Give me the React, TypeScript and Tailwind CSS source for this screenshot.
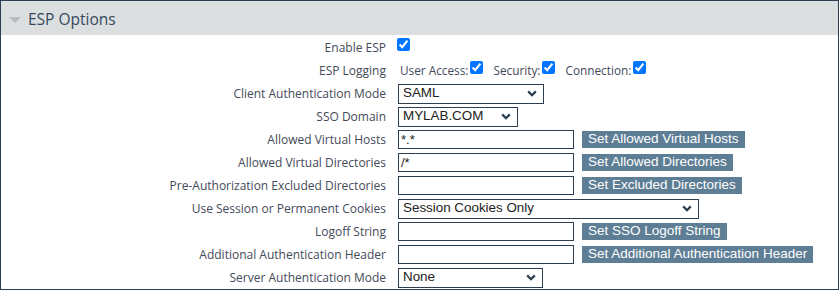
import React from 'react';

const labelFont = { fontFamily: '"Open Sans", "Noto Sans", sans-serif' };

const Chevron: React.FC = () => (
  <svg width="10" height="7" viewBox="0 0 10 7" className="shrink-0">
    <path d="M1.2 1.4 L5 5.2 L8.8 1.4" fill="none" stroke="#2c3e50" strokeWidth="2.3" />
  </svg>
);

const Select: React.FC<{ value: string; width: string }> = ({ value, width }) => (
  <div
    className={`${width} h-[20px] border border-[#2c3e50] flex items-center justify-between pl-[4px] pr-[6px] text-[13.4px] text-[#222] font-['Liberation_Sans',Arial,sans-serif]`}
  >
    <span>{value}</span>
    <Chevron />
  </div>
);

const TextBox: React.FC<{ value?: string }> = ({ value }) => (
  <div className="w-[176px] h-[19px] border border-[#2c3e50] flex items-center pl-[2px] text-[13px] text-[#222] font-['Liberation_Sans',Arial,sans-serif]">
    {value}
  </div>
);

const ActionButton: React.FC<{ children: React.ReactNode }> = ({ children }) => (
  <div className="ml-[8px] h-[17px] bg-[#5e7e95] text-white px-[6px] flex items-center text-[13.5px] font-['Liberation_Sans',Arial,sans-serif]">
    {children}
  </div>
);

const Check: React.FC<{ nudge?: boolean }> = ({ nudge }) => (
  <input
    type="checkbox"
    checked
    readOnly
    className={`m-0 w-[13px] h-[13px] mb-[6px] ${nudge ? '-ml-[1px]' : ''}`}
  />
);

const Row: React.FC<{ label: string; children: React.ReactNode }> = ({ label, children }) => (
  <div className="flex h-[23px] items-center">
    <div className="w-[385px] text-right text-[12px] text-[#434a59]" style={labelFont}>
      {label}
    </div>
    <div className="ml-[12px] flex items-center">{children}</div>
  </div>
);

const InlineLabel: React.FC<{ children: React.ReactNode; first?: boolean }> = ({ children, first }) => (
  <span
    className={`text-[11.8px] text-[#434a59] mr-[2px] ${first ? 'ml-[2px]' : 'ml-[10px]'}`}
    style={labelFont}
  >
    {children}
  </span>
);

const App: React.FC = () => {
  return (
    <div className="w-[839px] h-[290px] border border-[#2c3e50] bg-white">
      <div className="h-[34px] bg-[#dcdfe0] flex items-center pt-[3px]">
        <svg width="12" height="6" viewBox="0 0 12 6" className="ml-[8px] mt-[1px]">
          <path d="M0 0 L12 0 L6 6 Z" fill="#b7bcc0" />
        </svg>
        <span className="ml-[7px] text-[15.5px] text-[#34495e]" style={labelFont}>
          ESP Options
        </span>
      </div>
      <div className="pt-[1px]">
        <Row label="Enable ESP">
          <Check nudge />
        </Row>
        <Row label="ESP Logging">
          <InlineLabel first>User Access:</InlineLabel>
          <Check />
          <InlineLabel>Security:</InlineLabel>
          <Check />
          <InlineLabel>Connection:</InlineLabel>
          <Check />
        </Row>
        <Row label="Client Authentication Mode">
          <Select value="SAML" width="w-[146px]" />
        </Row>
        <Row label="SSO Domain">
          <Select value="MYLAB.COM" width="w-[120px]" />
        </Row>
        <Row label="Allowed Virtual Hosts">
          <TextBox value="*.*" />
          <ActionButton>Set Allowed Virtual Hosts</ActionButton>
        </Row>
        <Row label="Allowed Virtual Directories">
          <TextBox value="/*" />
          <ActionButton>Set Allowed Directories</ActionButton>
        </Row>
        <Row label="Pre-Authorization Excluded Directories">
          <TextBox />
          <ActionButton>Set Excluded Directories</ActionButton>
        </Row>
        <Row label="Use Session or Permanent Cookies">
          <Select value="Session Cookies Only" width="w-[301px]" />
        </Row>
        <Row label="Logoff String">
          <TextBox />
          <ActionButton>Set SSO Logoff String</ActionButton>
        </Row>
        <Row label="Additional Authentication Header">
          <TextBox />
          <ActionButton>Set Additional Authentication Header</ActionButton>
        </Row>
        <Row label="Server Authentication Mode">
          <Select value="None" width="w-[145px]" />
        </Row>
      </div>
    </div>
  );
};

export default App;
